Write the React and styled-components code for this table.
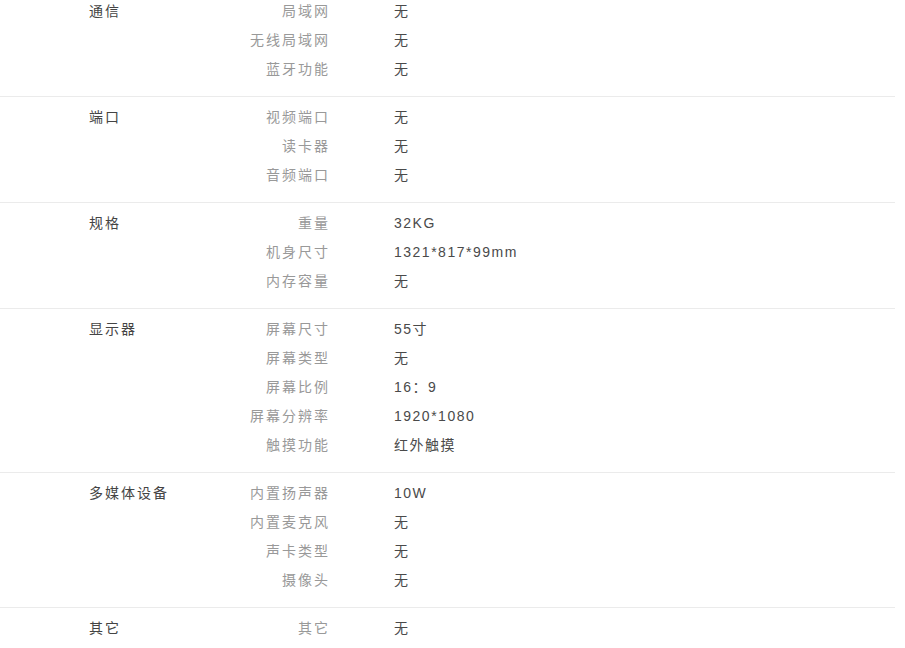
import styled, { createGlobalStyle } from "styled-components";

const GlobalStyle = createGlobalStyle`
  body {
    margin: 0;
    background: #fff;
    font-family: "Liberation Sans", Arial, "Noto Sans CJK SC", sans-serif;
    overflow: hidden;
  }
`;

const Table = styled.div`
  width: 895px;
  margin-top: -9px;
`;

const Section = styled.div`
  display: grid;
  grid-template-columns: 160px 170px 1fr;
  padding: 6px 0 12px;
  border-bottom: 1px solid ${(p) => (p.last ? "transparent" : "#ebebeb")};
`;

const Category = styled.div`
  padding-left: 89px;
  font-size: 14px;
  line-height: 29px;
  color: #444;
  letter-spacing: 2px;
  white-space: nowrap;
`;

const Rows = styled.div`
  grid-column: 2 / 4;
  display: flex;
  flex-direction: column;
`;

const Row = styled.div`
  display: grid;
  grid-template-columns: 170px 1fr;
  line-height: 29px;
  font-size: 14px;
`;

const Label = styled.div`
  text-align: right;
  color: #999;
  letter-spacing: 2px;
`;

const Value = styled.div`
  padding-left: 64px;
  color: #4a4a4a;
  letter-spacing: 1.5px;
`;

const specs = [
  {
    name: "通信",
    items: [
      ["局域网", "无"],
      ["无线局域网", "无"],
      ["蓝牙功能", "无"],
    ],
  },
  {
    name: "端口",
    items: [
      ["视频端口", "无"],
      ["读卡器", "无"],
      ["音频端口", "无"],
    ],
  },
  {
    name: "规格",
    items: [
      ["重量", "32KG"],
      ["机身尺寸", "1321*817*99mm"],
      ["内存容量", "无"],
    ],
  },
  {
    name: "显示器",
    items: [
      ["屏幕尺寸", "55寸"],
      ["屏幕类型", "无"],
      ["屏幕比例", "16：9"],
      ["屏幕分辨率", "1920*1080"],
      ["触摸功能", "红外触摸"],
    ],
  },
  {
    name: "多媒体设备",
    items: [
      ["内置扬声器", "10W"],
      ["内置麦克风", "无"],
      ["声卡类型", "无"],
      ["摄像头", "无"],
    ],
  },
  {
    name: "其它",
    items: [["其它", "无"]],
  },
];

const App = () => {
  return (
    <>
      <GlobalStyle />
      <Table>
        {specs.map((s, i) => (
          <Section key={s.name} last={i === specs.length - 1}>
            <Category>{s.name}</Category>
            <Rows>
              {s.items.map(([label, value]) => (
                <Row key={label}>
                  <Label>{label}</Label>
                  <Value>{value}</Value>
                </Row>
              ))}
            </Rows>
          </Section>
        ))}
      </Table>
    </>
  );
};

export default App;
